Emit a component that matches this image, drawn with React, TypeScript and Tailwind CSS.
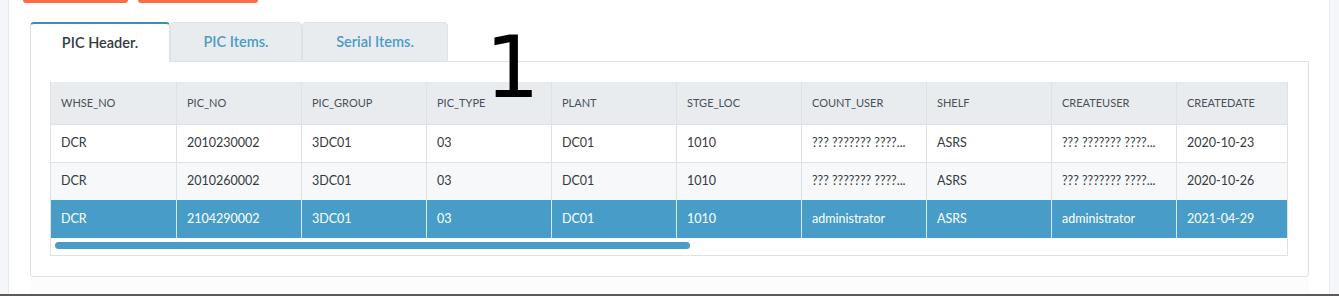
const columns = [
  "WHSE_NO",
  "PIC_NO",
  "PIC_GROUP",
  "PIC_TYPE",
  "PLANT",
  "STGE_LOC",
  "COUNT_USER",
  "SHELF",
  "CREATEUSER",
  "CREATEDATE",
];

const rows = [
  ["DCR", "2010230002", "3DC01", "03", "DC01", "1010", "??? ??????? ????...", "ASRS", "??? ??????? ????...", "2020-10-23"],
  ["DCR", "2010260002", "3DC01", "03", "DC01", "1010", "??? ??????? ????...", "ASRS", "??? ??????? ????...", "2020-10-26"],
  ["DCR", "2104290002", "3DC01", "03", "DC01", "1010", "administrator", "ASRS", "administrator", "2021-04-29"],
];

export default function App() {
  return (
    <div className="flex h-[296px] w-full flex-col overflow-hidden bg-white font-['Lato',sans-serif]">
      <div className="flex min-h-0 flex-1">
        <div className="w-[9px] shrink-0 border-r border-[#e6e9ee] bg-[#f4f6f9]" />

        <div className="relative flex min-w-0 flex-1 flex-col">
          <div className="ml-[14px] flex gap-[10px]">
            <div className="h-[3px] w-[105px] rounded-b-[4px] bg-[#fd6c42]" />
            <div className="h-[3px] w-[120px] rounded-b-[4px] bg-[#fd6c42]" />
          </div>

          <div className="mt-[19px] flex pr-[20px] pl-[21px]">
            <div className="flex h-[40px] w-[140px] items-center justify-center rounded-t-[4px] border-x border-t-2 border-x-[#dee2e6] border-t-[#3c8dbc] bg-white text-[14.5px] font-semibold text-[#343a40]">
              PIC Header.
            </div>
            <div className="flex h-[40px] w-[132px] items-center justify-center rounded-t-[4px] border border-[#dee2e6] bg-[#e9ecef] text-[14.5px] font-semibold text-[#4a9cc7]">
              PIC Items.
            </div>
            <div className="flex h-[40px] w-[146px] items-center justify-center rounded-t-[4px] border border-[#dee2e6] bg-[#e9ecef] text-[14.5px] font-semibold text-[#4a9cc7]">
              Serial Items.
            </div>
            <div className="flex-1 border-b border-[#dee2e6]" />
          </div>

          <div className="mr-[20px] ml-[21px] rounded-b-[4px] border-x border-b border-[#dee2e6] bg-white pt-[20px] pr-[20px] pb-[20px] pl-[19px]">
            <div className="overflow-hidden border-x border-b border-[#dee2e6]">
              <div className="flex bg-[#e9ecef]">
                {columns.map((c, j) => (
                  <div
                    key={c}
                    className={
                      j === 0
                        ? "flex h-[42px] w-[126px] shrink-0 items-center border-r border-[#dee2e6] pl-[10px] text-[11px] text-[#495057]"
                        : "flex h-[42px] w-[125px] shrink-0 items-center border-r border-[#dee2e6] pl-[10px] text-[11px] text-[#495057]"
                    }
                  >
                    {c}
                  </div>
                ))}
              </div>
              {rows.map((r, i) => {
                const selected = i === 2;
                return (
                  <div
                    key={i}
                    className={
                      selected
                        ? "flex bg-[#489dc8] text-white"
                        : i === 1
                        ? "flex border-t border-[#dee2e6] bg-[#f7f8fa] text-[#343a40]"
                        : "flex border-t border-[#dee2e6] bg-white text-[#343a40]"
                    }
                  >
                    {r.map((v, j) => (
                      <div
                        key={j}
                        className={
                          (j === 0 ? "w-[126px] " : "w-[125px] ") +
                          (selected
                            ? "flex h-[38px] shrink-0 items-center overflow-hidden border-r border-[#d6e8f2] pl-[10px] text-[12.5px] whitespace-nowrap"
                            : "flex h-[37px] shrink-0 items-center overflow-hidden border-r border-[#dee2e6] pl-[10px] text-[12.5px] whitespace-nowrap")
                        }
                      >
                        {v}
                      </div>
                    ))}
                  </div>
                );
              })}
              <div className="flex h-[17px] items-start pt-[4px] pl-[4px]">
                <div className="h-[7px] w-[635px] rounded-full bg-[#4a9cc7]" />
              </div>
            </div>
          </div>

          <div className="mr-[20px] ml-[22px] flex-1 bg-[#fcfcfd]" />

          <div className="pointer-events-none absolute left-[476px] top-[24px] font-['DejaVu_Sans',sans-serif] text-[86px] leading-none text-black">
            1
          </div>
        </div>

        <div className="w-[10px] shrink-0 border-l border-[#e6e9ee] bg-[#f4f6f9]" />
      </div>
      <div className="h-[2px] bg-[#5a5a5a]" />
    </div>
  );
}
